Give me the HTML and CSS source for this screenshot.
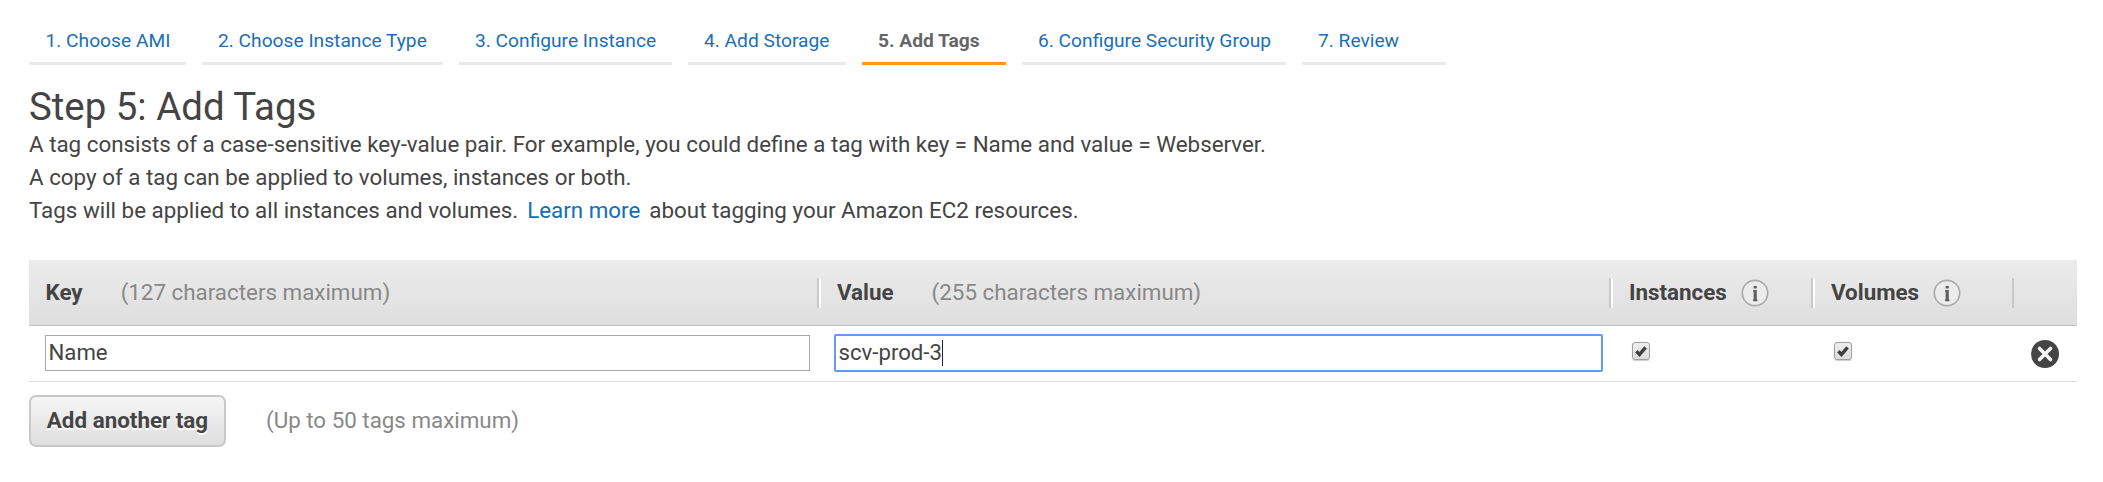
FILE: index.html
```
<!DOCTYPE html>
<html lang="en">
<head>
<meta charset="utf-8">
<title>Step 5: Add Tags</title>
<link rel="stylesheet" href="styles.css">
</head>
<body>
<nav class="steps">
  <a class="step s1"><span>1. Choose AMI</span></a>
  <a class="step s2"><span>2. Choose Instance Type</span></a>
  <a class="step s3"><span>3. Configure Instance</span></a>
  <a class="step s4"><span>4. Add Storage</span></a>
  <a class="step s5 active"><span>5. Add Tags</span></a>
  <a class="step s6"><span>6. Configure Security Group</span></a>
  <a class="step s7"><span>7. Review</span></a>
</nav>
<main>
  <h1><span>Step 5: Add Tags</span></h1>
  <div class="intro">
    <p><span>A tag consists of a case-sensitive key-value pair. For example, you could define a tag with key = Name and value = Webserver.</span></p>
    <p><span>A copy of a tag can be applied to volumes, instances or both.</span></p>
    <p><span>Tags will be applied to all instances and volumes.</span><a class="learn">Learn more</a><span>about tagging your Amazon EC2 resources.</span></p>
  </div>
  <section class="table">
    <div class="grid head">
      <div class="th"><b>Key</b><span class="hint key-hint">(127 characters maximum)</span></div>
      <div class="th"><b>Value</b><span class="hint value-hint">(255 characters maximum)</span></div>
      <div class="th"><b>Instances</b>
        <svg class="info" viewBox="0 0 28 28"><circle cx="14" cy="14" r="12.7" fill="#ececec" stroke="#aaa" stroke-width="1.7"/><path d="M12.6 7h3.2v2.4h-3.2zM12 11h3.8v9.6h.6v1.6h-4.4v-1.6h.6v-8h-.6z" fill="#606060"/></svg>
      </div>
      <div class="th"><b>Volumes</b>
        <svg class="info" viewBox="0 0 28 28"><circle cx="14" cy="14" r="12.7" fill="#ececec" stroke="#aaa" stroke-width="1.7"/><path d="M12.6 7h3.2v2.4h-3.2zM12 11h3.8v9.6h.6v1.6h-4.4v-1.6h.6v-8h-.6z" fill="#606060"/></svg>
      </div>
      <div class="th"></div>
    </div>
    <div class="grid row">
      <div class="field key-field"><span>Name</span></div>
      <div class="field value-field"><span>scv-prod-3</span><i class="caret"></i></div>
      <div class="check"><svg viewBox="0 0 12 12"><path d="M1.3 6.2 4.5 9.4 10.6 2.4" fill="none" stroke="#404040" stroke-width="3.4"/></svg></div>
      <div class="check"><svg viewBox="0 0 12 12"><path d="M1.3 6.2 4.5 9.4 10.6 2.4" fill="none" stroke="#404040" stroke-width="3.4"/></svg></div>
      <svg class="remove" viewBox="0 0 28 28"><circle cx="14" cy="14" r="14" fill="#444"/><path d="M8.5 8.5l11 11M19.5 8.5l-11 11" stroke="#f5f5f5" stroke-width="3.6" stroke-linecap="round"/></svg>
    </div>
  </section>
  <div class="actions">
    <button class="add"><span>Add another tag</span></button>
    <span class="hint">(Up to 50 tags maximum)</span>
  </div>
</main>
</body>
</html>
```
FILE: styles.css
```
* { box-sizing: border-box; }
body {
  margin: 0;
  padding: 17px 26px 0 29px;
  background: #fff;
  color: #444;
  font: 22.37px/33px Roboto, sans-serif;
}
.steps { display: flex; gap: 16px; height: 48px; }
.step {
  padding-left: 16px;
  border-bottom: 3px solid #eaeaea;
  color: #1b6fb8;
  font-size: 19.2px;
  line-height: 47px;
  white-space: nowrap;
}
.s1 { width: 157px; padding-left: 16.5px; }
.s2 { width: 241px; }
.s3 { width: 213px; }
.s4 { width: 158px; }
.s5 { width: 144px; }
.s6 { width: 264px; }
.s7 { width: 144px; }
.active { border-color: #ff9a1a; color: #666; font-weight: 700; }
h1 { margin: 22px 0 0; font-size: 38.4px; line-height: 40px; font-weight: 400; }
.intro { padding-top: 1px; }
.intro p { margin: 0; height: 33px; white-space: nowrap; }
.learn { margin: 0 9px; color: #146eb4; }
.table { margin-top: 33px; }
.grid { display: grid; grid-template-columns: 792px 792px 202px 199px 63px; }
.head {
  height: 66px;
  background: linear-gradient(#ececec, #dedede);
  border-bottom: 1px solid #c5c5c5;
  align-items: center;
}
.th {
  display: flex;
  align-items: center;
  height: 30px;
  padding-left: 16px;
  border-right: 2px solid #fff;
  background: linear-gradient(#c8c8c8, #c8c8c8) right / 2px 100% no-repeat;
}
.th:first-child { padding-left: 16.5px; }
.th:nth-child(4) { border-right: 0; }
.th:last-child { border: 0; background: none; }
.hint { color: #888; }
.key-hint { margin-left: 38px; }
.value-hint { margin-left: 38px; }
.info { width: 28px; height: 28px; margin-left: 14px; }
.row { height: 56px; border-bottom: 1px solid #ddd; align-items: start; }
.field { display: flex; align-items: center; background: #fff; font-size: 22.2px; }
.field span { padding-bottom: 2px; }
.key-field { height: 36px; margin: 9px 11px 0 16px; padding-left: 2.5px; border: 1px solid #aaa; }
.value-field { height: 38px; margin: 8px 10px 0 13px; padding-left: 2.5px; border: 2px solid #639af5; border-radius: 2px; }
.caret { width: 1px; height: 26px; background: #222; }
.check {
  width: 18px;
  height: 18px;
  margin: 16px 0 0 19px;
  border: 1px solid #a0a0a0;
  border-radius: 3px;
  background: linear-gradient(#eee, #ddd);
  box-shadow: 0 1px 1px #ccc;
  padding: 2px;
}
.check svg { display: block; width: 12px; height: 12px; }
.remove { width: 28px; height: 28px; margin: 14px 0 0 17px; }
.actions { display: flex; align-items: center; margin-top: 13px; }
.actions .hint { padding-bottom: 2px; }
.add {
  width: 197px;
  height: 52px;
  margin: 0 40px 0 0;
  padding: 0 0 2px;
  border: 2px solid #c8c8c8;
  border-radius: 7px;
  background: linear-gradient(#f6f6f6, #dedede);
  color: #444;
  font: 700 22.4px/33px Roboto, sans-serif;
  text-shadow: 0 2px 0 #fff;
}
```
